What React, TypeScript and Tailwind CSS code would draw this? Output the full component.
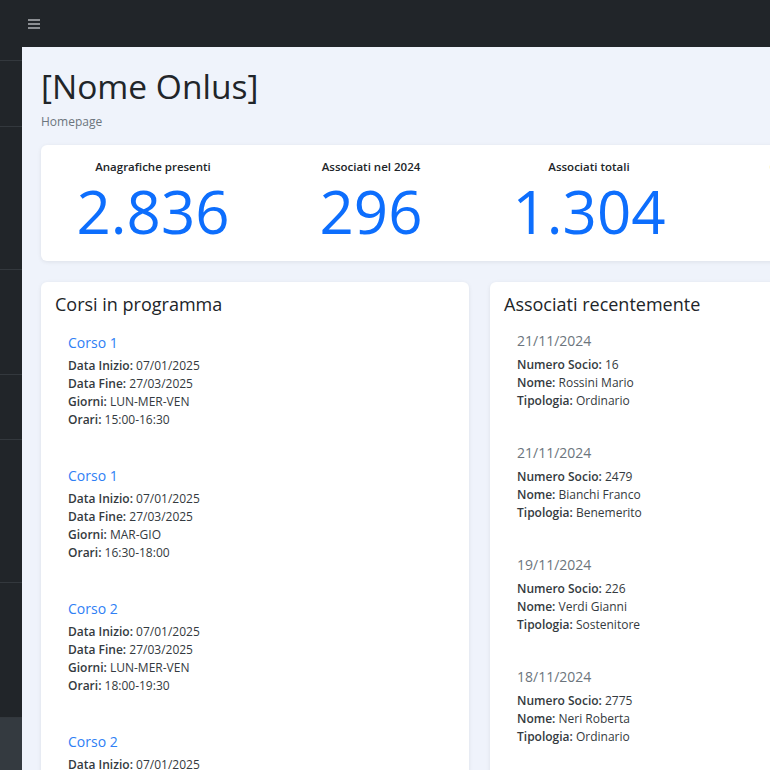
import React from 'react';

// Dati della dashboard
const stats = [
  { label: 'Anagrafiche presenti', value: '2.836' },
  { label: 'Associati nel 2024', value: '296' },
  { label: 'Associati totali', value: '1.304' },
  { label: 'Corsi in corso', value: '12' },
];

const corsi = [
  { nome: 'Corso 1', inizio: '07/01/2025', fine: '27/03/2025', giorni: 'LUN-MER-VEN', orari: '15:00-16:30' },
  { nome: 'Corso 1', inizio: '07/01/2025', fine: '27/03/2025', giorni: 'MAR-GIO', orari: '16:30-18:00' },
  { nome: 'Corso 2', inizio: '07/01/2025', fine: '27/03/2025', giorni: 'LUN-MER-VEN', orari: '18:00-19:30' },
  { nome: 'Corso 2', inizio: '07/01/2025', fine: '27/03/2025', giorni: 'MAR-GIO', orari: '19:30-21:00' },
];

const associati = [
  { data: '21/11/2024', numero: '16', nome: 'Rossini Mario', tipologia: 'Ordinario' },
  { data: '21/11/2024', numero: '2479', nome: 'Bianchi Franco', tipologia: 'Benemerito' },
  { data: '19/11/2024', numero: '226', nome: 'Verdi Gianni', tipologia: 'Sostenitore' },
  { data: '18/11/2024', numero: '2775', nome: 'Neri Roberta', tipologia: 'Ordinario' },
  { data: '15/11/2024', numero: '1302', nome: 'Gialli Luca', tipologia: 'Ordinario' },
];

// Altezze delle voci della sidebar (compressa)
const sideItems = [61, 66, 143, 105, 65, 143, 135];

function Field({ label, value }: { label: string; value: string }) {
  return (
    <p className="text-[12px] leading-[18px] text-[#343a40]">
      <span className="font-semibold">{label}:</span> {value}
    </p>
  );
}

export default function App() {
  return (
    <div
      className="flex h-[770px] w-[770px] overflow-hidden bg-[#eff3fb] text-[#212529]"
      style={{ fontFamily: '"Open Sans", "Noto Sans", sans-serif' }}
    >
      {/* Sidebar */}
      <aside className="flex w-[22px] shrink-0 flex-col bg-[#212529]">
        {sideItems.map((h, i) => (
          <div key={i} className="shrink-0 border-b border-[#33383d]" style={{ height: h }} />
        ))}
        <div className="flex-1 bg-[#343a40]" />
      </aside>

      <div className="flex min-w-0 flex-1 flex-col">
        {/* Topbar */}
        <header className="flex h-[47px] shrink-0 items-center bg-[#212529] pl-[6px]">
          <div className="flex w-[12px] flex-col gap-[2px]">
            <span className="h-[2px] bg-[#8c8f93]" />
            <span className="h-[2px] bg-[#8c8f93]" />
            <span className="h-[2px] bg-[#8c8f93]" />
          </div>
        </header>

        <main className="flex-1 pl-[19px] pt-[18px]">
          <h1 className="text-[33.5px] leading-[42px] font-normal text-[#212529]">[Nome Onlus]</h1>
          <p className="mt-[7px] text-[12px] leading-[16px] text-[#6c757d]">Homepage</p>

          {/* Statistiche */}
          <div className="mt-[15px] flex w-[1000px] rounded-[6px] bg-white pb-[15px] pl-[3px] pt-[13px] shadow-[0_1px_4px_rgba(0,0,0,0.08)]">
            {stats.map((s) => (
              <div key={s.label} className="flex w-[218px] flex-col items-center">
                <span className="text-[11.5px] leading-[18px] font-semibold text-[#212529]">{s.label}</span>
                <span className="text-[60px] leading-[70px] text-[#0d6efd]">{s.value}</span>
              </div>
            ))}
          </div>

          <div className="mt-[21px] flex gap-[21px]">
            {/* Corsi */}
            <section className="w-[428px] shrink-0 rounded-[6px] bg-white px-[14px] pt-[8px] pb-[20px] shadow-[0_1px_4px_rgba(0,0,0,0.08)]">
              <h2 className="text-[18px] leading-[28px] text-[#212529]">Corsi in programma</h2>
              <div className="mt-[15px] flex flex-col gap-[37px] pl-[13px]">
                {corsi.map((c, i) => (
                  <div key={i}>
                    <a className="block text-[14px] leading-[20px] text-[#2f7ff5]">{c.nome}</a>
                    <div className="mt-[4px]">
                      <Field label="Data Inizio" value={c.inizio} />
                      <Field label="Data Fine" value={c.fine} />
                      <Field label="Giorni" value={c.giorni} />
                      <Field label="Orari" value={c.orari} />
                    </div>
                  </div>
                ))}
              </div>
            </section>

            {/* Associati recenti */}
            <section className="w-[428px] shrink-0 rounded-[6px] bg-white px-[14px] pt-[8px] pb-[20px] shadow-[0_1px_4px_rgba(0,0,0,0.08)]">
              <h2 className="text-[18px] leading-[28px] text-[#212529]">Associati recentemente</h2>
              <div className="mt-[13px] flex flex-col gap-[33px] pl-[13px]">
                {associati.map((a, i) => (
                  <div key={i}>
                    <p className="text-[14px] leading-[20px] text-[#6c757d]">{a.data}</p>
                    <div className="mt-[5px]">
                      <Field label="Numero Socio" value={a.numero} />
                      <Field label="Nome" value={a.nome} />
                      <Field label="Tipologia" value={a.tipologia} />
                    </div>
                  </div>
                ))}
              </div>
            </section>
          </div>
        </main>
      </div>
    </div>
  );
}
